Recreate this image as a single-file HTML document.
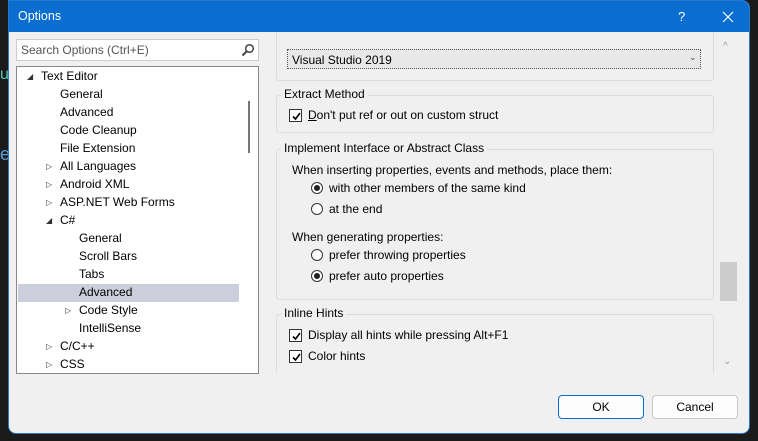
<!DOCTYPE html>
<html><head><style>
*{margin:0;padding:0;box-sizing:border-box}
body{width:758px;height:441px;background:#1b1b1b;font-family:"Liberation Sans",sans-serif;font-size:12px;color:#000;position:relative;overflow:hidden}
.a{position:absolute;white-space:nowrap}
#dlg{position:absolute;left:8px;top:0;width:742px;height:434px;background:#f0f0f0;border-radius:0 8px 8px 8px;overflow:hidden;border:1px solid #2a78c8}
#title{position:absolute;left:0;top:0;width:100%;height:31px;background:#0a6ed1;color:#fff;font-size:12.5px}
.t{position:absolute;line-height:18px;height:18px;white-space:nowrap}
.arr{position:absolute;font-size:8px;color:#333;white-space:nowrap}
.grp{position:absolute;border:1px solid #dcdcdc;border-radius:3px}
.lbl{position:absolute;background:#f0f0f0;padding:0 3px;line-height:14px;white-space:nowrap}
.cb{position:absolute;width:13px;height:13px;border:1px solid #333;background:#fff}
.cb svg{position:absolute;left:1px;top:1px}
.rb{position:absolute;width:12px;height:12px;border:1px solid #333;border-radius:50%;background:#fff}
.rb.on::after{content:"";position:absolute;left:2px;top:2px;width:6px;height:6px;border-radius:50%;background:#222}
.btn{position:absolute;height:24px;border:1px solid #c8c8c8;border-radius:4px;background:#fdfdfd;text-align:center;line-height:22px}
</style></head><body>
<div class="a" style="left:0;top:66px;color:#4ec9b0;font-size:16px">u</div>
<div class="a" style="left:0;top:144px;color:#569cd6;font-size:18px">e</div>
<div id="dlg">
 <div id="title"><span class="a" style="left:9px;top:8px">Options</span>
  <span class="a" style="left:669px;top:8px;font-size:13px">?</span>
  <svg class="a" style="left:713px;top:10px" width="12" height="12"><path d="M1 1L11 11M11 1L1 11" stroke="#fff" stroke-width="1.2"/></svg>
 </div>
 <div class="a" style="left:7px;top:38px;width:243px;height:22px;background:#fff;border:1px solid #ccc"><span class="a" style="left:4px;top:3px;color:#555">Search Options (Ctrl+E)</span>
  <svg class="a" style="left:224px;top:3px" width="14" height="14"><circle cx="8.5" cy="5.5" r="3.8" fill="none" stroke="#444" stroke-width="1.5"/><path d="M6 8L1.5 12.5" stroke="#444" stroke-width="2"/></svg></div>
 <div class="a" style="left:7px;top:65px;width:243px;height:308px;background:#fff;border:1px solid #888">
  <div class="a" style="left:231px;top:34px;width:2px;height:52px;background:#777"></div>
  <div class="a" style="left:1px;top:217px;width:221px;height:18px;background:#cccedb"></div>
 </div>
 <div style="position:absolute;left:7px;top:0">
  <span class="arr" style="left:11px;top:71px">◢</span><span class="t" style="left:25px;top:66px">Text Editor</span>
  <span class="t" style="left:44px;top:84px">General</span>
  <span class="t" style="left:44px;top:102px">Advanced</span>
  <span class="t" style="left:44px;top:120px">Code Cleanup</span>
  <span class="t" style="left:44px;top:138px">File Extension</span>
  <span class="arr" style="left:30px;top:161px">▷</span><span class="t" style="left:44px;top:156px">All Languages</span>
  <span class="arr" style="left:30px;top:179px">▷</span><span class="t" style="left:44px;top:174px">Android XML</span>
  <span class="arr" style="left:30px;top:197px">▷</span><span class="t" style="left:44px;top:192px">ASP.NET Web Forms</span>
  <span class="arr" style="left:30px;top:215px">◢</span><span class="t" style="left:44px;top:210px">C#</span>
  <span class="t" style="left:63px;top:228px">General</span>
  <span class="t" style="left:63px;top:246px">Scroll Bars</span>
  <span class="t" style="left:63px;top:264px">Tabs</span>
  <span class="t" style="left:63px;top:282px">Advanced</span>
  <span class="arr" style="left:49px;top:305px">▷</span><span class="t" style="left:63px;top:300px">Code Style</span>
  <span class="t" style="left:63px;top:318px">IntelliSense</span>
  <span class="arr" style="left:30px;top:341px">▷</span><span class="t" style="left:44px;top:336px">C/C++</span>
  <span class="arr" style="left:30px;top:359px">▷</span><span class="t" style="left:44px;top:354px">CSS</span>
 </div>
 <div class="a" style="left:264px;top:31px;width:450px;height:341px;overflow:hidden">
  <div class="grp" style="left:3px;top:-5px;width:438px;height:54px"></div>
  <div class="a" style="left:14px;top:17px;width:414px;height:20px;background:#e8e8e8;border:1px dotted #555"><span class="a" style="left:4px;top:3px">Visual Studio 2019</span><span class="a" style="left:401px;top:2px;font-size:9px;color:#555">⌄</span></div>
  <div class="grp" style="left:3px;top:63px;width:438px;height:38px"></div>
  <span class="lbl" style="left:8px;top:55px">Extract Method</span>
  <div class="cb" style="left:16px;top:77px"><svg width="11" height="11"><path d="M2 5.5L4.5 8L9 2" stroke="#000" stroke-width="1.6" fill="none"/></svg></div>
  <span class="a" style="left:35px;top:76px"><u>D</u>on't put ref or out on custom struct</span>
  <div class="grp" style="left:3px;top:117px;width:438px;height:151px"></div>
  <span class="lbl" style="left:8px;top:109px">Implement Interface or Abstract Class</span>
  <span class="a" style="left:19px;top:131px">When inserting properties, events and methods, place them:</span>
  <div class="rb on" style="left:38px;top:150px"></div><span class="a" style="left:56px;top:149px">with other members of the same kind</span>
  <div class="rb" style="left:38px;top:171px"></div><span class="a" style="left:56px;top:170px">at the end</span>
  <span class="a" style="left:19px;top:198px">When generating properties:</span>
  <div class="rb" style="left:38px;top:217px"></div><span class="a" style="left:56px;top:216px">prefer throwing properties</span>
  <div class="rb on" style="left:38px;top:238px"></div><span class="a" style="left:56px;top:237px">prefer auto properties</span>
  <div class="grp" style="left:3px;top:282px;width:438px;height:100px"></div>
  <span class="lbl" style="left:8px;top:274px">Inline Hints</span>
  <div class="cb" style="left:16px;top:297px"><svg width="11" height="11"><path d="M2 5.5L4.5 8L9 2" stroke="#000" stroke-width="1.6" fill="none"/></svg></div>
  <span class="a" style="left:35px;top:296px">Display all hints while pressing Alt+F1</span>
  <div class="cb" style="left:16px;top:318px"><svg width="11" height="11"><path d="M2 5.5L4.5 8L9 2" stroke="#000" stroke-width="1.6" fill="none"/></svg></div>
  <span class="a" style="left:35px;top:317px">Color hints</span>
 </div>
 <span class="a" style="left:714px;top:40px;color:#999;font-size:10px">^</span>
 <div class="a" style="left:711px;top:261px;width:17px;height:39px;background:#cdcdcd"></div>
 <span class="a" style="left:714px;top:355px;color:#999;font-size:10px">⌄</span>
 <div class="btn" style="left:549px;top:394px;width:86px;border-color:#0a6ed1">OK</div>
 <div class="btn" style="left:643px;top:394px;width:86px">Cancel</div>
</div>
</body></html>
